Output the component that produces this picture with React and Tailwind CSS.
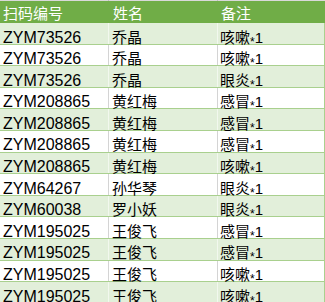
const rows = [
  ['ZYM73526', '乔晶', '咳嗽'],
  ['ZYM73526', '乔晶', '咳嗽'],
  ['ZYM73526', '乔晶', '眼炎'],
  ['ZYM208865', '黄红梅', '感冒'],
  ['ZYM208865', '黄红梅', '感冒'],
  ['ZYM208865', '黄红梅', '感冒'],
  ['ZYM208865', '黄红梅', '咳嗽'],
  ['ZYM64267', '孙华琴', '眼炎'],
  ['ZYM60038', '罗小妖', '眼炎'],
  ['ZYM195025', '王俊飞', '感冒'],
  ['ZYM195025', '王俊飞', '感冒'],
  ['ZYM195025', '王俊飞', '咳嗽'],
  ['ZYM195025', '王俊飞', '咳嗽'],
]

const font = { fontFamily: '"Liberation Sans", "Noto Sans CJK SC", sans-serif' }

export default function App() {
  return (
    <div className="h-[302px] w-[325px] overflow-hidden bg-white text-black" style={font}>
      <div className="flex h-px bg-[#d9d9d9]">
        <div className="w-[109px] border-r border-[#bfbfbf]" />
        <div className="w-[109px] border-r border-[#bfbfbf]" />
        <div className="flex-1" />
      </div>

      <div className="flex h-[22px] bg-[#70ad47] text-[15px] leading-[16px] text-white">
        <div className="w-[109px] pl-[3px] pt-[5px] whitespace-nowrap">扫码编号</div>
        <div className="w-[109px] pl-[4px] pt-[5px] whitespace-nowrap">姓名</div>
        <div className="flex-1 pl-[3px] pt-[5px] whitespace-nowrap">备注</div>
      </div>

      {rows.map((row, index) => {
        const band = index % 2 === 0
        const sep = band ? 'border-[#f2f8ee]' : 'border-[#d4d4d4]'
        return (
          <div key={index} className={`flex h-[21.6px] border-b border-[#a9d08e] ${band ? 'bg-[#e2efda]' : 'bg-white'}`}>
            <div className={`w-[109px] border-r ${sep} pl-[3px] pt-[6.5px] text-[16px] leading-[16px] whitespace-nowrap`}>{row[0]}</div>
            <div className={`w-[109px] border-r ${sep} pl-[3px] pt-[6.5px] text-[15px] leading-[16px] whitespace-nowrap`}>{row[1]}</div>
            <div className="flex-1 border-r border-[#a9d08e] pl-[2px] pt-[6.5px] text-[15px] leading-[16px] whitespace-nowrap">
              {row[2]}<span className="relative top-[3px] text-[12px]">*</span>1
            </div>
          </div>
        )
      })}
    </div>
  )
}
